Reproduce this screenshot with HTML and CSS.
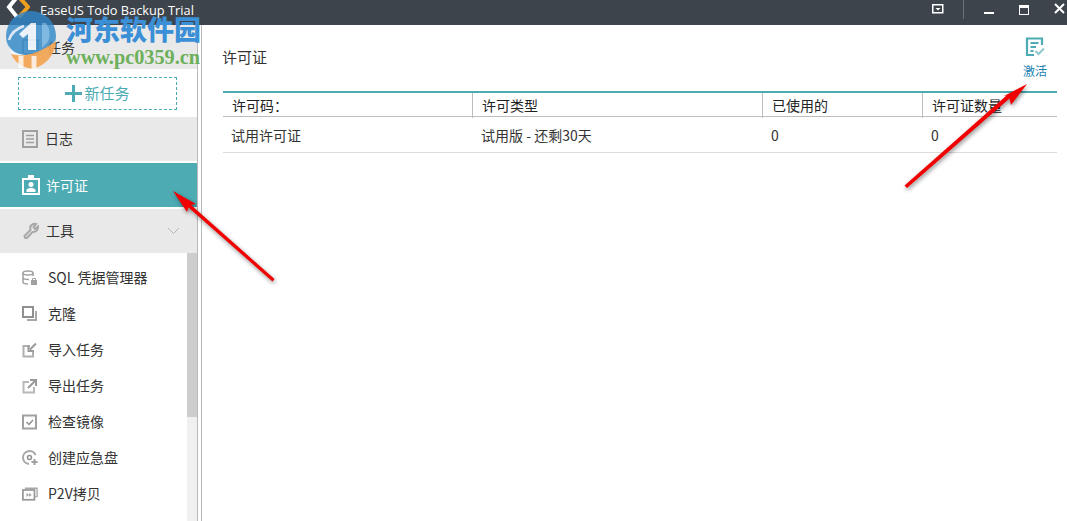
FILE: index.html
```html
<!DOCTYPE html>
<html lang="zh-CN">
<head>
    <meta charset="UTF-8">
    <title>EaseUS Todo Backup Trial</title>
    <link rel="stylesheet" href="styles.css">
</head>
<body>

<div class="title-bar">
    <svg class="app-logo" width="26" height="18" viewBox="0 0 26 18">
        <path d="M13 -3 L5 7 L13 17" fill="none" stroke="#fff" stroke-width="4"/>
        <path d="M15 -3 L24 7 L15 17" fill="none" stroke="#f0a020" stroke-width="4"/>
    </svg>
    <span class="app-title">EaseUS Todo Backup Trial</span>
    <div class="window-buttons">
        <svg class="win-menu" width="12" height="10" viewBox="0 0 12 10"><rect x="0.75" y="0.75" width="10" height="8" fill="none" stroke="#fff" stroke-width="1.5"/><path d="M3.5 4 H8.5 L6 6.5 Z" fill="#fff"/></svg>
        <span class="win-divider"></span>
        <span class="win-min"></span>
        <span class="win-max"></span>
        <svg class="win-close" width="11" height="11" viewBox="0 0 11 11"><path d="M1 1 L10 10 M10 1 L1 10" stroke="#fff" stroke-width="2"/></svg>
    </div>
</div>

<div class="main">
    <div class="sidebar">
        <div class="nav-item task-head">
            <svg width="18" height="16" viewBox="0 0 18 16"><rect x="1" y="1" width="15" height="14" fill="none" stroke="#a5a5a5" stroke-width="2"/><rect x="5" y="5" width="7" height="6" fill="none" stroke="#bdbdbd"/></svg>
            <span>任务</span>
        </div>
        <div class="new-task-wrap">
            <div class="new-task"><span class="plus"></span>新任务</div>
        </div>
        <div class="nav-item">
            <svg width="16" height="18" viewBox="0 0 16 18"><rect x="1" y="1" width="14" height="16" fill="none" stroke="#a0a0a0" stroke-width="2"/><path d="M4 5.5 H12 M4 9 H12 M4 12.5 H12" stroke="#a0a0a0" stroke-width="1.5"/></svg>
            <span>日志</span>
        </div>
        <div class="nav-item active">
            <svg width="18" height="20" viewBox="0 0 18 20"><rect x="1" y="4" width="16" height="15" fill="none" stroke="#fff" stroke-width="2"/><rect x="6" y="0" width="6" height="4" fill="#fff"/><circle cx="9" cy="9.5" r="2.5" fill="#fff"/><path d="M4.5 17 V14.5 Q9 11 13.5 14.5 V17 Z" fill="#fff"/></svg>
            <span>许可证</span>
        </div>
        <div class="nav-item tools">
            <svg width="18" height="18" viewBox="0 0 18 18"><path d="M2.5 14 L8.5 8 A4.5 4.5 0 0 1 14 2 L11.5 5 L13 7 L16 4.5 A4.8 4.8 0 0 1 10.5 10 L5 15.8 Q2.5 16.8 2.5 14 Z" fill="none" stroke="#a8a8a8" stroke-width="2"/></svg>
            <span>工具</span>
            <svg class="chevron" width="13" height="8" viewBox="0 0 13 8"><path d="M1 1 L6.5 6.5 L12 1" fill="none" stroke="#b5b5b5"/></svg>
        </div>
        <div class="tool-area">
            <ul class="tool-list">
                <li>
                    <svg width="16" height="16" viewBox="0 0 16 16"><ellipse cx="6" cy="3" rx="5" ry="2" fill="none" stroke="#a0a0a0" stroke-width="1.5"/><path d="M1 3 V12 Q1 14 6 14 M1 7.5 Q1 9.5 7 9.5 M11 3 V6" fill="none" stroke="#a0a0a0" stroke-width="1.5"/><rect x="9" y="10" width="6" height="5" fill="#a0a0a0"/><path d="M10.5 10 V8.5 H13.5 V10" fill="none" stroke="#a0a0a0"/></svg>
                    <span>SQL 凭据管理器</span>
                </li>
                <li>
                    <svg width="16" height="16" viewBox="0 0 16 16"><rect x="1" y="1" width="10" height="10" fill="none" stroke="#909090" stroke-width="2"/><path d="M14 5 V14 H5" fill="none" stroke="#a8a8a8" stroke-width="2"/></svg>
                    <span>克隆</span>
                </li>
                <li>
                    <svg width="16" height="16" viewBox="0 0 16 16"><path d="M8 4 H1.5 V14.5 H11 V9" fill="none" stroke="#b0b0b0" stroke-width="2"/><path d="M14 1.5 L8 7.5 M6.5 3.5 V9 H12" fill="none" stroke="#999" stroke-width="2"/></svg>
                    <span>导入任务</span>
                </li>
                <li>
                    <svg width="16" height="16" viewBox="0 0 16 16"><path d="M7 4 H1.5 V14.5 H12 V9" fill="none" stroke="#b8b8b8" stroke-width="2"/><path d="M6 10 L13 3 M8 2 H14 V8" fill="none" stroke="#999" stroke-width="2"/></svg>
                    <span>导出任务</span>
                </li>
                <li>
                    <svg width="16" height="16" viewBox="0 0 16 16"><rect x="1" y="1.5" width="13" height="13" fill="none" stroke="#a0a0a0" stroke-width="2"/><path d="M4.5 8 L7 10.5 L11 6" fill="none" stroke="#909090" stroke-width="1.5"/></svg>
                    <span>检查镜像</span>
                </li>
                <li>
                    <svg width="16" height="16" viewBox="0 0 16 16"><path d="M13.5 5 A6.5 6.5 0 1 0 7 14" fill="none" stroke="#a8a8a8" stroke-width="2"/><circle cx="7.5" cy="7.5" r="2" fill="none" stroke="#909090" stroke-width="1.5"/><path d="M12.5 9 V15 M9.5 12 H15.5" stroke="#a0a0a0" stroke-width="2"/></svg>
                    <span>创建应急盘</span>
                </li>
                <li>
                    <svg width="18" height="16" viewBox="0 0 18 16"><path d="M4 3 V1.5 H17 V11 H15" fill="none" stroke="#a8a8a8" stroke-width="1.5"/><rect x="1" y="3.5" width="13" height="11" fill="none" stroke="#999" stroke-width="2"/><path d="M5 6.5 L8 9 L5 11.5 Z M8 6.5 L11 9 L8 11.5 Z" fill="#a8a8a8"/></svg>
                    <span>P2V拷贝</span>
                </li>
            </ul>
            <div class="scrollbar"><div class="scroll-thumb"></div></div>
        </div>
    </div>

    <div class="splitter"></div>

    <div class="content">
        <div class="content-head">
            <div class="content-title">许可证</div>
            <div class="activate">
                <svg width="20" height="20" viewBox="0 0 20 20"><path d="M17 8 V1.5 H2 V18 H9" fill="none" stroke="#4dabb3" stroke-width="2.2"/><path d="M5.5 6 H13.5 M5.5 10 H11 M5.5 14 H8.5" stroke="#4dabb3" stroke-width="1.8"/><path d="M10.5 14 L13.5 17 L19 11.5" fill="none" stroke="#8fc7cc" stroke-width="2"/></svg>
                <span>激活</span>
            </div>
        </div>
        <div class="license-table">
            <div class="table-row table-header">
                <div class="cell">许可码：</div>
                <div class="cell">许可类型</div>
                <div class="cell">已使用的</div>
                <div class="cell">许可证数量</div>
            </div>
            <div class="table-row table-body">
                <div class="cell">试用许可证</div>
                <div class="cell">试用版 - 还剩30天</div>
                <div class="cell">0</div>
                <div class="cell">0</div>
            </div>
        </div>
    </div>
</div>

<!-- site watermark stamped over the shot -->
<div class="watermark">
    <svg class="wm-logo" width="60" height="62" viewBox="0 0 60 62">
        <circle cx="31" cy="26" r="25" fill="#2f86c8" opacity="0.88"/>
        <path d="M6 30 Q10 44 26 45 Q44 44 56 30 L55 34 Q52 52 33 59 Q14 56 6 30 Z" fill="#fff" opacity="0.9"/>
        <path d="M11 44 Q30 50 56 31 Q54 52 33 59 Q17 57 11 44 Z" fill="#f3a04a" opacity="0.95"/>
        <path d="M21 46 V58 M34 46 V60" stroke="#fff" stroke-width="5" opacity="0.8"/>
        <path d="M9 30 Q12 20 24 16" fill="none" stroke="#fff" stroke-width="2.5" opacity="0.8"/>
        <path d="M19 24 L31 13 H36 V40 H28 V24 L23 28 Z" fill="#fff" opacity="0.9"/>
        <path d="M42 13 H46 Q52 22 48 32 L42 38 Z" fill="#8cc3e8" opacity="0.7"/>
    </svg>
    <span class="wm-name">河东软件园</span>
    <span class="wm-url">www.pc0359.cn</span>
</div>

<svg class="arrows" width="1067" height="521" viewBox="0 0 1067 521">
    <polygon points="173,191 196,204 191,205 274.5,279 272.5,281.5 188.5,207.5 187,212" fill="#f00000"/>
    <polygon points="1027,84 1011,105 1009.5,98.5 907,188 904.5,185.5 1006.5,95.5 1004,96" fill="#f00000"/>
</svg>

</body>
</html>
```

FILE: styles.css
```css
body, html {
    margin: 0;
    height: 100%;
    overflow: hidden;
}
body {
    position: relative;
    display: flex;
    flex-direction: column;
    background: #fff;
    color: #333;
    font-family: "Noto Sans CJK SC", "Open Sans", sans-serif;
    font-size: 14px;
}
.title-bar {
    display: flex;
    align-items: flex-start;
    flex: 0 0 25px;
    background: #3e444c;
    overflow: hidden;
}
.app-logo {
    margin-left: 4px;
}
.app-title {
    margin-left: 10px;
    margin-top: 1px;
    color: #fff;
    font-family: "Open Sans", sans-serif;
    font-size: 12.8px;
    line-height: 18px;
}
.window-buttons {
    position: relative;
    width: 135px;
    height: 25px;
    margin-left: auto;
}
/* caption buttons sit at fixed places in the frame */
.window-buttons > * {
    position: absolute;
}
.win-menu {
    left: 0;
    top: 4px;
}
.win-divider {
    left: 31px;
    top: 0;
    width: 1px;
    height: 19px;
    background: #6b7178;
}
.win-min {
    left: 52px;
    top: 12px;
    width: 10px;
    height: 2px;
    background: #fff;
}
.win-max {
    left: 87px;
    top: 5px;
    width: 8px;
    height: 6px;
    border: 1px solid #fff;
    border-top-width: 3px;
}
.win-close {
    left: 122px;
    top: 3px;
}
.main {
    display: flex;
    flex: 1;
    min-height: 0;
}
.sidebar {
    display: flex;
    flex-direction: column;
    flex: 0 0 197px;
    overflow: hidden;
}
.nav-item {
    display: flex;
    align-items: center;
    flex: 0 0 44px;
    box-sizing: border-box;
    margin-bottom: 2px;
    padding-left: 22px;
    gap: 7px;
    background: #e9e9e9;
    font-size: 14px;
}
.nav-item span {
    margin-top: -2px;
}
.nav-item svg {
    flex: 0 0 auto;
}
.nav-item.active {
    gap: 6px;
    background: #4dabb3;
    color: #fff;
}
.nav-item.active span {
    margin-top: 0;
}
.nav-item.tools {
    gap: 6px;
    margin-bottom: 0;
}
.chevron {
    margin-left: auto;
    margin-right: 17px;
}
.task-head {
    margin-bottom: 0;
}
.task-head span {
    margin-top: 0;
}
.new-task-wrap {
    flex: 0 0 48px;
    padding: 8px 20px 7px 18px;
    box-sizing: border-box;
}
.new-task {
    display: flex;
    align-items: center;
    justify-content: center;
    height: 33px;
    box-sizing: border-box;
    padding-bottom: 3px;
    border: 1px dashed #4dabb3;
    color: #4dabb3;
    font-size: 15px;
}
.plus {
    width: 17px;
    height: 17px;
    margin-top: 3px;
    margin-right: 2px;
    background:
        linear-gradient(#4dabb3, #4dabb3) center / 17px 3px no-repeat,
        linear-gradient(#4dabb3, #4dabb3) center / 3px 17px no-repeat;
}
.tool-area {
    display: flex;
    flex: 1;
    min-height: 0;
}
.tool-list {
    flex: 1;
    margin: 0;
    padding: 7px 0 0 22px;
    list-style: none;
    overflow: hidden;
}
.tool-list li {
    display: flex;
    align-items: center;
    height: 36px;
    gap: 10px;
    font-size: 14px;
}
.tool-list span {
    margin-top: -2px;
}
.tool-list svg {
    flex: 0 0 16px;
}
.scrollbar {
    flex: 0 0 10px;
    background: #f0f0f0;
}
.scroll-thumb {
    height: 164px;
    background: #cdcdcd;
}
.splitter {
    flex: 0 0 3px;
    border-left: 1px solid #b9b9b9;
    border-right: 1px solid #b9b9b9;
}
.content {
    flex: 1;
    padding: 0 10px 0 21px;
}
.content-head {
    display: flex;
    justify-content: space-between;
    height: 66px;
}
.content-title {
    margin-top: 21px;
    margin-left: -1px;
    font-size: 15px;
    line-height: 22px;
}
.activate {
    display: flex;
    flex-direction: column;
    align-items: center;
    width: 24px;
    margin-top: 12px;
    margin-right: 10px;
    color: #1a7fb0;
    font-size: 12px;
    line-height: 17px;
    gap: 5px;
}
.license-table {
    border-top: 2px solid #4dabb3;
}
.table-row {
    display: grid;
    grid-template-columns: 249px 290px 160px 1fr;
}
.table-header {
    height: 23px;
    border-bottom: 1px solid #bdbdbd;
    color: #222;
    line-height: 25px;
}
.table-header .cell {
    padding-left: 9px;
    white-space: nowrap;
}
.table-header .cell + .cell {
    border-left: 1px solid #bdbdbd;
}
.table-body {
    height: 35px;
    border-bottom: 1px solid #dcdcdc;
    line-height: 36px;
}
.table-body .cell {
    padding-left: 8px;
}
.table-body .cell + .cell {
    padding-left: 9px;
}
.watermark {
    position: absolute;
    left: 0;
    top: 10px;
    width: 206px;
    height: 60px;
    pointer-events: none;
}
.wm-logo {
    position: absolute;
    left: 0;
    top: 0;
    opacity: 0.92;
}
.wm-name {
    position: absolute;
    left: 66px;
    top: 1px;
    color: #3a8fd6;
    font-size: 27px;
    font-weight: 900;
    line-height: 36px;
    white-space: nowrap;
}
.wm-url {
    position: absolute;
    left: 66px;
    top: 35px;
    color: #6cb05a;
    font-family: "Liberation Serif", serif;
    font-size: 20.3px;
    font-weight: 700;
    line-height: 24px;
    white-space: nowrap;
}
.arrows {
    position: absolute;
    left: 0;
    top: 0;
    filter: drop-shadow(1px 2px 2px rgba(0, 0, 0, 0.45));
    pointer-events: none;
}
```
